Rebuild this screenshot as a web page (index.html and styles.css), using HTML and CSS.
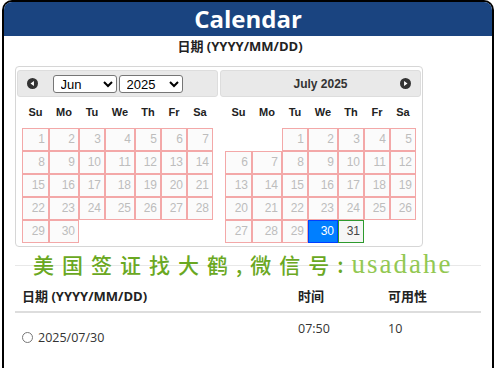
FILE: index.html
```html
<!DOCTYPE html>
<html lang="zh">
<head>
    <meta charset="UTF-8">
    <meta name="viewport" content="width=device-width, initial-scale=1.0">
    <title>Calendar</title>
    <link rel="stylesheet" href="styles.css">
</head>
<body>
    <div class="frame">
        <div class="title-bar">Calendar</div>
        <div class="date-label">日期 (YYYY/MM/DD)</div>

        <div class="datepicker">
            <div class="month">
                <div class="month-head">
                    <span class="nav">
                        <svg width="11" height="11" viewBox="0 0 12 12"><circle cx="6" cy="6" r="6" fill="#333"/><path d="M7.6 3.4 L3.8 6 L7.6 8.6 Z" fill="#fff"/></svg>
                    </span>
                    <div class="month-title">
                        <select class="pick"><option>Jun</option></select>
                        <select class="pick"><option>2025</option></select>
                    </div>
                </div>
                <div class="days">
                    <span class="dow">Su</span><span class="dow">Mo</span><span class="dow">Tu</span><span class="dow">We</span><span class="dow">Th</span><span class="dow">Fr</span><span class="dow">Sa</span>
                    <span class="day">1</span><span class="day">2</span><span class="day">3</span><span class="day">4</span><span class="day">5</span><span class="day">6</span><span class="day">7</span>
                    <span class="day">8</span><span class="day">9</span><span class="day">10</span><span class="day">11</span><span class="day">12</span><span class="day">13</span><span class="day">14</span>
                    <span class="day">15</span><span class="day">16</span><span class="day">17</span><span class="day">18</span><span class="day">19</span><span class="day">20</span><span class="day">21</span>
                    <span class="day">22</span><span class="day">23</span><span class="day">24</span><span class="day">25</span><span class="day">26</span><span class="day">27</span><span class="day">28</span>
                    <span class="day">29</span><span class="day">30</span>
                </div>
            </div>

            <div class="month">
                <div class="month-head">
                    <span></span>
                    <div class="month-title">July 2025</div>
                    <span class="nav next">
                        <svg width="11" height="11" viewBox="0 0 12 12"><circle cx="6" cy="6" r="6" fill="#333"/><path d="M4.4 3.4 L8.2 6 L4.4 8.6 Z" fill="#fff"/></svg>
                    </span>
                </div>
                <div class="days">
                    <span class="dow">Su</span><span class="dow">Mo</span><span class="dow">Tu</span><span class="dow">We</span><span class="dow">Th</span><span class="dow">Fr</span><span class="dow">Sa</span>
                    <span></span><span></span><span class="day">1</span><span class="day">2</span><span class="day">3</span><span class="day">4</span><span class="day">5</span>
                    <span class="day">6</span><span class="day">7</span><span class="day">8</span><span class="day">9</span><span class="day">10</span><span class="day">11</span><span class="day">12</span>
                    <span class="day">13</span><span class="day">14</span><span class="day">15</span><span class="day">16</span><span class="day">17</span><span class="day">18</span><span class="day">19</span>
                    <span class="day">20</span><span class="day">21</span><span class="day">22</span><span class="day">23</span><span class="day">24</span><span class="day">25</span><span class="day">26</span>
                    <span class="day">27</span><span class="day">28</span><span class="day">29</span><span class="day selected">30</span><span class="day open">31</span>
                </div>
            </div>
        </div>

        <div class="watermark"><span class="cn">美国签证找大鹤,微信号:</span><span class="en">usadahe</span></div>

        <div class="slots">
            <div class="slot-row slot-head">
                <span>日期 (YYYY/MM/DD)</span>
                <span>时间</span>
                <span>可用性</span>
            </div>
            <div class="slot-row">
                <label class="slot-date"><input type="radio" name="slot"> 2025/07/30</label>
                <span>07:50</span>
                <span>10</span>
            </div>
        </div>
    </div>
</body>
</html>
```

FILE: styles.css
```css
* {
    box-sizing: border-box;
}

body {
    margin: 0;
    font-family: "Open Sans", "Noto Sans CJK SC", sans-serif;
    color: #333;
    background: #fff;
}

.frame {
    position: relative;
    margin: 0 6px 0 2px;
    min-height: 368px;
    border: 2px solid #000;
    border-bottom: none;
    border-radius: 10px 10px 0 0;
    overflow: hidden;
}

.title-bar {
    height: 34px;
    line-height: 34px;
    background-color: #1a4480;
    color: #fff;
    font-size: 24px;
    font-weight: bold;
    text-align: center;
}

.date-label {
    margin-top: 2px;
    padding-right: 16px;
    line-height: 16px;
    font-size: 13px;
    font-weight: bold;
    text-align: center;
    color: #222;
}

/* datepicker */
.datepicker {
    display: flex;
    width: 408px;
    margin: 12px 0 0 11px;
    padding: 3px 0;
    border: 1px solid #d6d6d6;
    border-radius: 4px;
    font-family: "Liberation Sans", Arial, sans-serif;
}

.month {
    flex: 1;
}

.month-head {
    display: grid;
    grid-template-columns: 1fr auto 1fr;
    align-items: center;
    height: 27px;
    margin: 0 1px;
    background-color: #e9e9e9;
    border: 1px solid #dddddd;
    border-radius: 3px;
}

.nav {
    display: flex;
    margin-left: 9px;
}

.nav.next {
    justify-self: end;
    margin: 0 9px 0 0;
}

.month-title {
    display: flex;
    gap: 2px;
    font-size: 12px;
    font-weight: bold;
    color: #333;
}

.pick {
    width: 64px;
    height: 18px;
    padding: 0 0 0 3px;
    font: 13px "Liberation Sans", Arial, sans-serif;
    color: #000;
    background: #fff;
    border: 1px solid #767676;
    border-radius: 3px;
}

.days {
    display: grid;
    grid-template-columns: 27px 30px 26px 30px 26px 26px 26px;
    grid-template-rows: 31px repeat(5, 23px);
    justify-content: center;
}

.dow {
    line-height: 30px;
    font-size: 11px;
    font-weight: bold;
    text-align: center;
    color: #222;
}

.day {
    padding-right: 3px;
    line-height: 21px;
    font-size: 12px;
    text-align: right;
    color: #bdbdbd;
    background-color: #fbfbfb;
    border: 1px solid #f3a8a8;
}

.day.selected {
    background-color: #007fff;
    border-color: #003eff;
    color: #fff;
}

.day.open {
    background-color: #f6f6f6;
    border-color: #2e9a2e;
    color: #454545;
}

/* watermark over the page */
.watermark {
    position: absolute;
    top: 248px;
    left: 29px;
    line-height: 28px;
    white-space: nowrap;
}

.watermark .cn {
    font-family: "Noto Sans CJK SC", sans-serif;
    font-size: 21px;
    font-weight: 500;
    letter-spacing: 8px;
    color: #6aa822;
}

.watermark .en {
    font-family: "Liberation Serif", serif;
    font-size: 27px;
    letter-spacing: 2px;
    color: #93c852;
}

/* slots table */
.slots {
    width: 466px;
    margin: 18px 0 0 11px;
    border-top: 1px solid #e8e8e8;
    font-size: 12.5px;
}

.slot-row {
    display: grid;
    grid-template-columns: 276px 90px 1fr;
}

.slot-row > * {
    padding: 7px 7px 0;
    line-height: 17px;
}

.slot-head {
    border-bottom: 2px solid #dddddd;
    font-size: 13px;
    font-weight: bold;
    color: #222;
}

.slot-head > * {
    padding-top: 22px;
    padding-bottom: 6px;
}

.slot-row .slot-date {
    display: flex;
    align-items: center;
    gap: 5px;
    padding-top: 16px;
}

.slot-date input {
    appearance: none;
    width: 11px;
    height: 11px;
    margin: 0;
    border: 1px solid #777;
    border-radius: 50%;
    background: #fff;
}
```
